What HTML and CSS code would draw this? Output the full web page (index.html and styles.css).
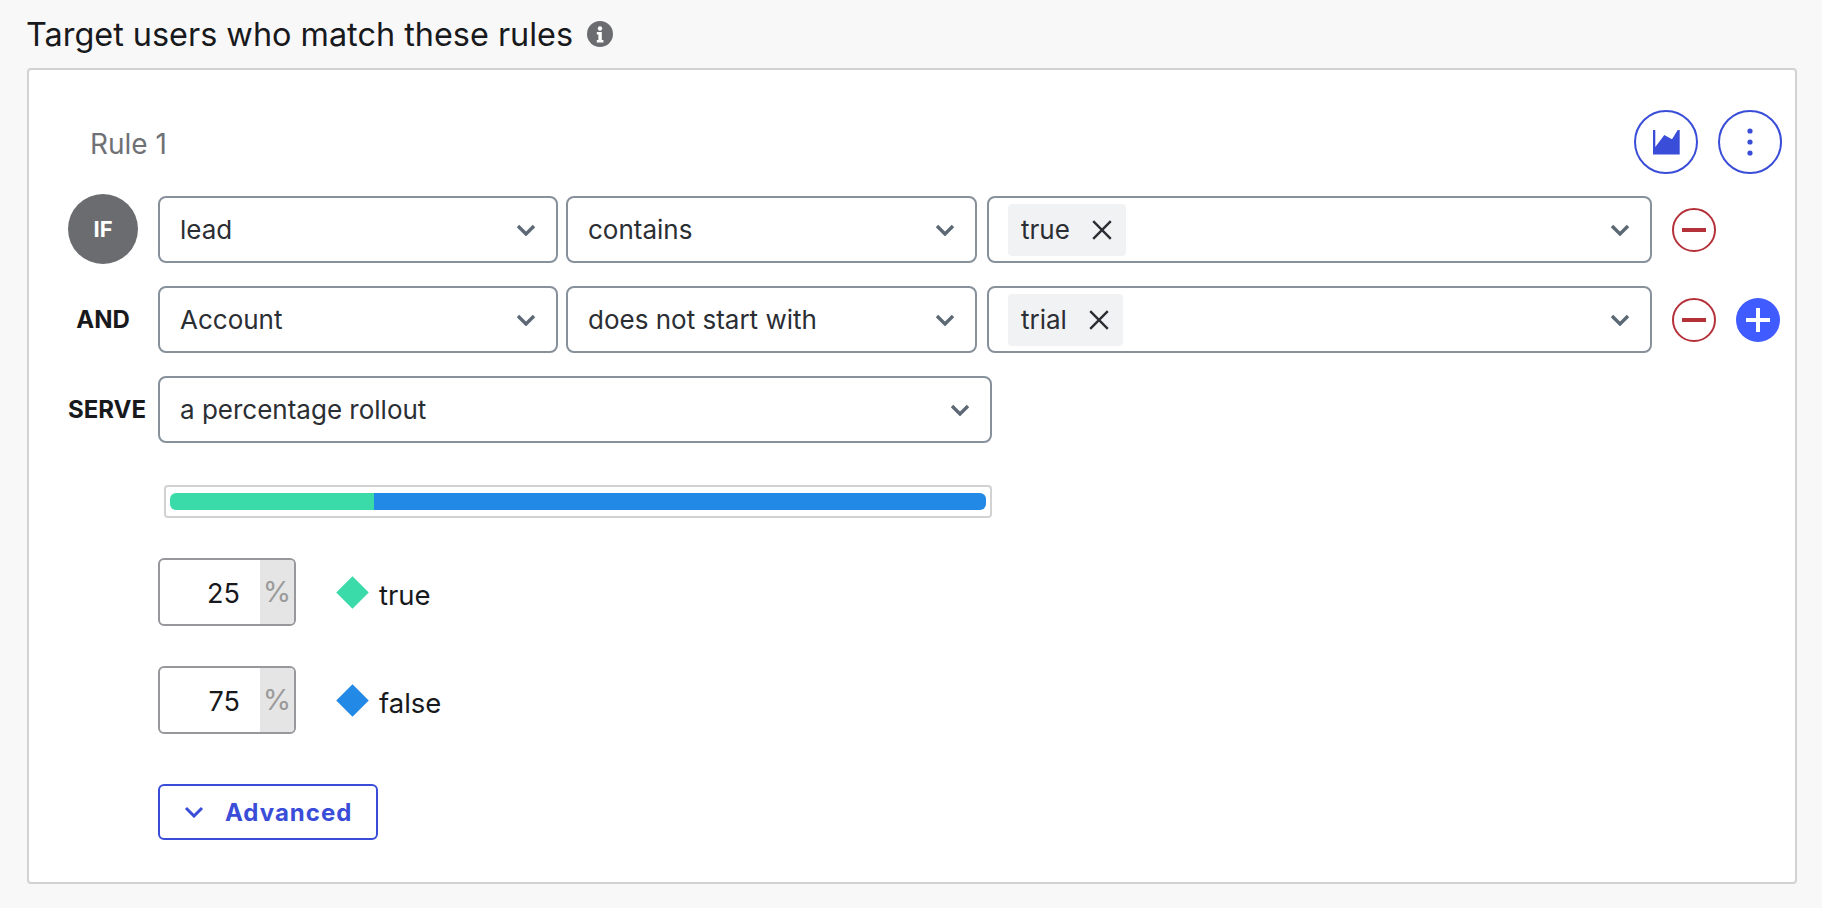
FILE: index.html
```html
<!DOCTYPE html>
<html>
<head>
  <title>Target users</title>
  <link rel="stylesheet" href="styles.css">
</head>
<body>
  <h2 class="title">Target users who match these rules
    <svg class="info" viewBox="0 0 26 26"><circle cx="13" cy="13" r="13" fill="#6b6c70"/><circle cx="13" cy="7.5" r="2.2" fill="#fff"/><path d="M9.8 11h5v8h1.6v2.4H9.8V19h1.6v-5.6H9.8z" fill="#fff"/></svg>
  </h2>
  <div class="card">
    <div class="rule-head">
      <span class="rule-name">Rule 1</span>
      <div class="rule-actions">
        <button class="round">
          <svg width="27" height="25" viewBox="0 0 27 25"><path d="M0 0h2.3v17L11.3 5 19 9.3 24.7 0h2v24.4H0z" fill="#3a4dd8"/></svg>
        </button>
        <button class="round">
          <svg width="6" height="28" viewBox="0 0 6 28"><circle cx="3" cy="3" r="2.6" fill="#3a4dd8"/><circle cx="3" cy="14" r="2.6" fill="#3a4dd8"/><circle cx="3" cy="25" r="2.6" fill="#3a4dd8"/></svg>
        </button>
      </div>
    </div>

    <div class="row first">
      <div class="label"><span class="if-badge">IF</span></div>
      <div class="select attr"><span>lead</span><svg class="chev" viewBox="0 0 20 12"><path d="M2 2l8 8 8-8" /></svg></div>
      <div class="select op"><span>contains</span><svg class="chev" viewBox="0 0 20 12"><path d="M2 2l8 8 8-8" /></svg></div>
      <div class="select val">
        <span class="chip">true<svg class="x" viewBox="0 0 20 20"><path d="M2 2l16 16M18 2L2 18"/></svg></span>
        <svg class="chev" viewBox="0 0 20 12"><path d="M2 2l8 8 8-8" /></svg>
      </div>
      <span class="minus"></span>
    </div>

    <div class="row">
      <div class="label"><span class="and">AND</span></div>
      <div class="select attr"><span>Account</span><svg class="chev" viewBox="0 0 20 12"><path d="M2 2l8 8 8-8" /></svg></div>
      <div class="select op"><span>does not start with</span><svg class="chev" viewBox="0 0 20 12"><path d="M2 2l8 8 8-8" /></svg></div>
      <div class="select val">
        <span class="chip">trial<svg class="x" viewBox="0 0 20 20"><path d="M2 2l16 16M18 2L2 18"/></svg></span>
        <svg class="chev" viewBox="0 0 20 12"><path d="M2 2l8 8 8-8" /></svg>
      </div>
      <span class="minus"></span>
      <span class="plus"></span>
    </div>

    <div class="row">
      <div class="label"><span class="serve">SERVE</span></div>
      <div class="select serve-select"><span>a percentage rollout</span><svg class="chev" viewBox="0 0 20 12"><path d="M2 2l8 8 8-8" /></svg></div>
    </div>

    <div class="bar">
      <div class="bar-true" style="width: 25%"></div>
      <div class="bar-false" style="width: 75%"></div>
    </div>

    <div class="split">
      <div class="pct"><span class="num">25</span><span class="sign">%</span></div>
      <span class="diamond green"></span>
      <span class="var-name">true</span>
    </div>
    <div class="split second">
      <div class="pct"><span class="num">75</span><span class="sign">%</span></div>
      <span class="diamond blue"></span>
      <span class="var-name">false</span>
    </div>

    <button class="advanced">
      <svg viewBox="0 0 20 12"><path d="M2 2l8 8 8-8" /></svg>
      Advanced
    </button>
  </div>
</body>
</html>
```

FILE: styles.css
```css
body {
  margin: 0;
  background: #f8f8f8;
  font-family: 'Inter', 'Liberation Sans', sans-serif;
  font-size: 26px;
  color: #2b2e33;
}
.title {
  display: flex;
  align-items: center;
  gap: 14px;
  margin: 0;
  padding: 16px 0 0 26px;
  height: 52px;
  box-sizing: border-box;
  font-size: 32.4px;
  font-weight: 400;
  color: #18191c;
}
.info {
  width: 26px;
  height: 26px;
}
.card {
  margin: 16px 0 0 27px;
  width: 1770px;
  height: 816px;
  box-sizing: border-box;
  padding: 40px 13px 0 39px;
  background: #fff;
  border: 2px solid #d2d2d2;
  border-radius: 4px;
}
.rule-head {
  display: flex;
  justify-content: space-between;
  align-items: center;
  height: 64px;
}
.rule-name {
  margin: 4px 0 0 22px;
  color: #6f7175;
  font-size: 28px;
}
.rule-actions {
  display: flex;
  gap: 20px;
}
.round {
  display: flex;
  align-items: center;
  justify-content: center;
  width: 64px;
  height: 64px;
  padding: 0;
  background: #fff;
  border: 2px solid #3a4dd8;
  border-radius: 50%;
}
.row {
  display: flex;
  align-items: center;
  height: 67px;
  margin-top: 23px;
}
.row.first {
  margin-top: 22px;
}
.label {
  display: flex;
  justify-content: flex-start;
  width: 90px;
  flex: none;
}
.if-badge {
  display: flex;
  align-items: center;
  justify-content: center;
  width: 70px;
  height: 70px;
  margin-top: -2px;
  border-radius: 50%;
  background: #6b6c70;
  color: #fff;
  font-size: 22px;
  font-weight: 700;
}
.and, .serve {
  font-weight: 700;
  font-size: 24px;
  color: #18191c;
}
.and {
  width: 70px;
  text-align: center;
}
.select {
  display: flex;
  align-items: center;
  justify-content: space-between;
  height: 67px;
  box-sizing: border-box;
  padding: 0 20px 0 20px;
  border: 2px solid #87919c;
  border-radius: 8px;
  background: #fff;
  flex: none;
}
.attr { width: 400px; }
.op { width: 411px; margin-left: 8px; }
.val { width: 665px; margin-left: 10px; padding-left: 19px; }
.serve-select { width: 834px; }
.chev {
  width: 20px;
  height: 12px;
  flex: none;
  fill: none;
  stroke: #5c6975;
  stroke-width: 3.4;
}
.chip {
  display: flex;
  align-items: center;
  height: 52px;
  padding: 0 13px;
  gap: 21px;
  background: #f1f2f4;
  border-radius: 4px;
}
.x {
  width: 22px;
  height: 22px;
  fill: none;
  stroke: #2b2e33;
  stroke-width: 2.2;
}
.minus, .plus {
  position: relative;
  width: 44px;
  height: 44px;
  box-sizing: border-box;
  border-radius: 50%;
  flex: none;
}
.minus {
  margin-left: 20px;
  border: 2px solid #b5313a;
}
.minus::before {
  content: "";
  position: absolute;
  left: 8px;
  right: 8px;
  top: 18px;
  height: 4px;
  background: #b5313a;
}
.plus {
  margin-left: 20px;
  background: #405bff;
}
.plus::before, .plus::after {
  content: "";
  position: absolute;
  background: #fff;
}
.plus::before {
  left: 10px;
  right: 10px;
  top: 20px;
  height: 4px;
}
.plus::after {
  top: 10px;
  bottom: 10px;
  left: 20px;
  width: 4px;
}
.bar {
  display: flex;
  width: 828px;
  height: 33px;
  box-sizing: border-box;
  margin: 42px 0 0 96px;
  padding: 6px 4px;
  border: 2px solid #d2d2d2;
  border-radius: 4px;
}
.bar-true {
  background: #3adba9;
  border-radius: 6px 0 0 6px;
}
.bar-false {
  background: #2389e6;
  border-radius: 0 6px 6px 0;
}
.split {
  display: flex;
  align-items: center;
  margin: 40px 0 0 90px;
}
.pct {
  display: flex;
  width: 138px;
  height: 68px;
  box-sizing: border-box;
  border: 2px solid #97979c;
  border-radius: 6px;
  overflow: hidden;
}
.num {
  width: 100px;
  padding-right: 20px;
  box-sizing: border-box;
  text-align: right;
  line-height: 68px;
  font-size: 27px;
  color: #18191c;
}
.sign {
  flex: 1;
  text-align: center;
  line-height: 64px;
  font-size: 29px;
  background: #e5e5e5;
  color: #9a9a9a;
}
.diamond {
  width: 23px;
  height: 23px;
  margin: 0 15px 0 45px;
  transform: rotate(45deg);
}
.green { background: #3adba9; }
.blue { background: #2389e6; }
.var-name {
  padding-top: 5px;
  font-size: 27.5px;
  color: #18191c;
}
.advanced {
  display: flex;
  align-items: center;
  gap: 21px;
  width: 220px;
  height: 56px;
  margin: 50px 0 0 90px;
  padding: 0 0 0 24px;
  background: #fff;
  border: 2px solid #3a4dd8;
  border-radius: 6px;
  font-family: inherit;
  font-size: 24px;
  font-weight: 700;
  letter-spacing: 1px;
  color: #3a4dd8;
}
.advanced svg {
  width: 20px;
  height: 12px;
  fill: none;
  stroke: #3a4dd8;
  stroke-width: 3;
}
```
